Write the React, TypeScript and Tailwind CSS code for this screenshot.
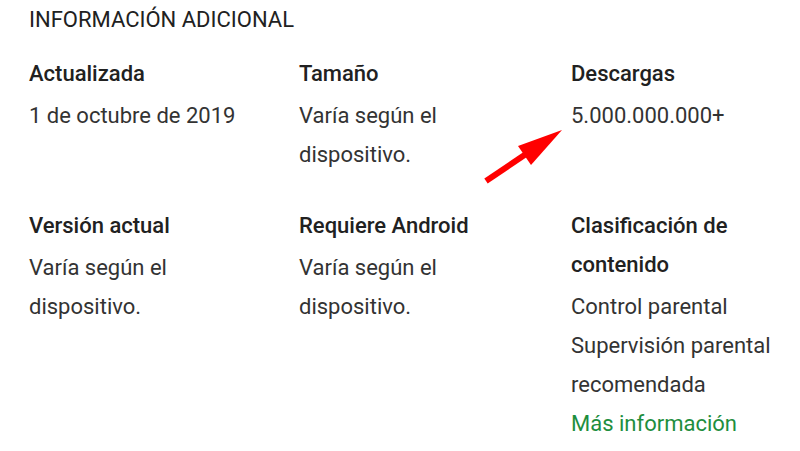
import React from "react";

interface Info {
  label: string[];
  values: string[];
  link?: string;
}

const rowOne: Info[] = [
  { label: ["Actualizada"], values: ["1 de octubre de 2019"] },
  { label: ["Tamaño"], values: ["Varía según el", "dispositivo."] },
  { label: ["Descargas"], values: ["5.000.000.000+"] },
];

const rowTwo: Info[] = [
  { label: ["Versión actual"], values: ["Varía según el", "dispositivo."] },
  { label: ["Requiere Android"], values: ["Varía según el", "dispositivo."] },
  {
    label: ["Clasificación de", "contenido"],
    values: ["Control parental", "Supervisión parental", "recomendada"],
    link: "Más información",
  },
];

const Cell = ({ item }: { item: Info }) => (
  <div>
    {item.label.map((l) => (
      <div key={l} className="text-[22px] leading-[39px] font-medium text-[#212121]">
        {l}
      </div>
    ))}
    <div className="mt-[3px]">
      {item.values.map((v) => (
        <div key={v} className="text-[22px] leading-[39px] text-[#333333]">
          {v}
        </div>
      ))}
      {item.link && (
        <div className="text-[22px] leading-[39px] text-[#1e8e3e]">{item.link}</div>
      )}
    </div>
  </div>
);

export default function App() {
  return (
    <div
      className="relative w-[800px] h-[451px] bg-white overflow-hidden pl-[29px]"
      style={{ fontFamily: "Roboto, 'Liberation Sans', sans-serif" }}
    >
      <h2 className="text-[22px] leading-[39px] text-[#212121] uppercase">Información adicional</h2>

      <div className="grid grid-cols-[270px_272px_1fr] mt-[15px]">
        {rowOne.map((it) => (
          <Cell key={it.label[0]} item={it} />
        ))}
      </div>
      <div className="grid grid-cols-[270px_272px_1fr] mt-[32px]">
        {rowTwo.map((it) => (
          <Cell key={it.label[0]} item={it} />
        ))}
      </div>

      {/* red annotation arrow pointing at the downloads */}
      <svg className="absolute left-0 top-0" width="800" height="451" viewBox="0 0 800 451">
        <line x1="486" y1="181" x2="526" y2="154" stroke="#ff0000" strokeWidth="6" strokeLinecap="butt" />
        <polygon points="562,130 518,146 531,165" fill="#ff0000" />
      </svg>
    </div>
  );
}
